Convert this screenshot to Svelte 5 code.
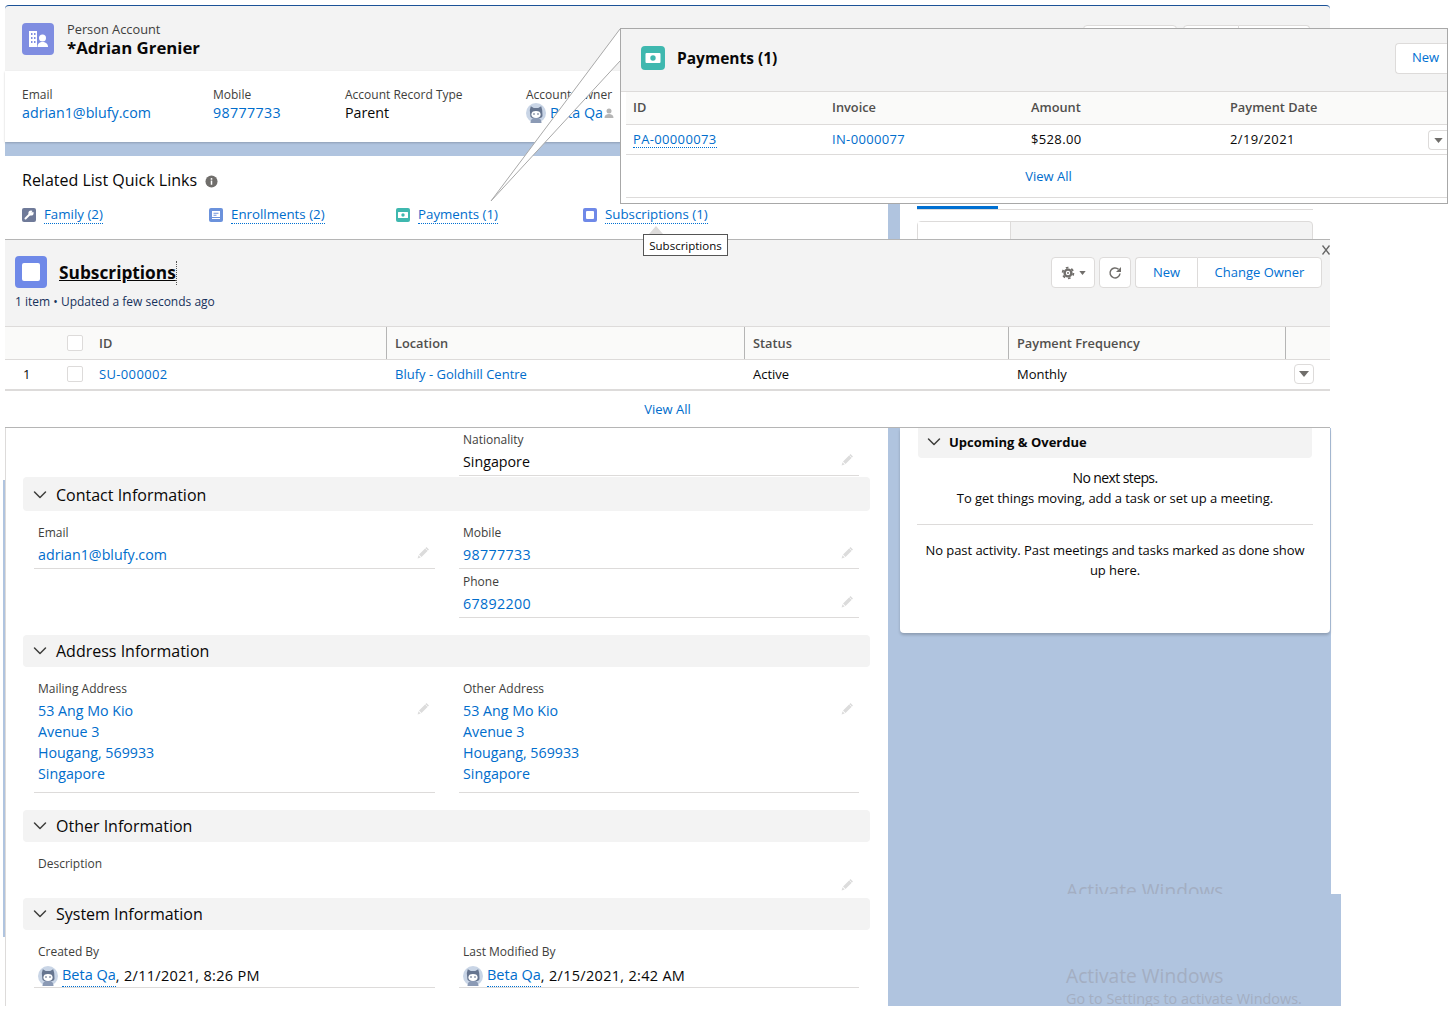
<script>
  // header strip fields
  const highlights = [
    { label: "Email", value: "adrian1@blufy.com", link: true, width: 191 },
    { label: "Mobile", value: "98777733", link: true, code: true, width: 132 },
    { label: "Account Record Type", value: "Parent", link: false, width: 181 }
  ];

  const quickLinks = [
    { name: "Family (2)", color: "#6f7a99", kind: "wrench" },
    { name: "Enrollments (2)", color: "#6b92dc", kind: "list" },
    { name: "Payments (1)", color: "#3fb8af", kind: "cash" },
    { name: "Subscriptions (1)", color: "#6f89e8", kind: "square" }
  ];

  const address = ["53 Ang Mo Kio", "Avenue 3", "Hougang, 569933", "Singapore"];
</script>

{#snippet avatar()}
  <svg class="avatar" viewBox="0 0 20 20" aria-hidden="true">
    <circle cx="10" cy="10" r="10" fill="#c9d5e6" />
    <path d="M3.800 7 4.800 3.200 7.800 5h4.400l3-1.800 1 3.800 .3 5.500c0 1.500-1 2.500-2.500 2.500h-7.200c-1.500 0-2.500-1-2.500-2.500z" fill="#66758f" />
    <path d="M4.500 20c0-3.500 2-5.500 5.500-5.500s5.500 2 5.500 5.500z" fill="#8b9ab5" />
    <ellipse cx="10" cy="11.500" rx="4.600" ry="3.400" fill="#fff" />
    <circle cx="8" cy="11" r=".8" fill="#4a5a78" />
    <circle cx="12" cy="11" r=".8" fill="#4a5a78" />
  </svg>
{/snippet}

{#snippet pencil()}
  <svg class="pencil" viewBox="0 0 13 13" aria-hidden="true">
    <path d="M9.500 1 12 3.500 4.500 11 2 8.500zM1.500 9.300 3.700 11.500 .6 12.400z" fill="#dcdcdc" />
    <path d="M8.300 2.300 10.800 4.800" stroke="#fff" stroke-width=".7" />
  </svg>
{/snippet}

{#snippet chevron()}
  <svg class="chevron" viewBox="0 0 14 14" aria-hidden="true">
    <path d="M1.500 4 7 9.500 12.500 4" fill="none" stroke="#3e3e3c" stroke-width="1.500" stroke-linecap="round" stroke-linejoin="round" />
  </svg>
{/snippet}

{#snippet linkIcon(kind, color)}
  <span class="mini-icon" style="background: {color}">
    <svg viewBox="0 0 14 14" aria-hidden="true">
      {#if kind === "wrench"}
        <path d="M3.500 10.500 8 6" stroke="#fff" stroke-width="2" stroke-linecap="round" />
        <circle cx="9" cy="5" r="2.600" fill="#fff" />
        <path d="M9.400 4.600 11.400 1.800 13 3.400z" fill={color} />
      {:else if kind === "list"}
        <path d="M3 3h8v6H3zM4.500 4.800v1h5v-1zM4.500 6.800v1h3v-1zM3 10h8v1H3z" fill="#fff" fill-rule="evenodd" />
      {:else if kind === "cash"}
        <path d="M2.500 4h9a.5.5 0 0 1 .5.500v5a.5.5 0 0 1-.5.500h-9a.5.5 0 0 1-.5-.500v-5a.5.5 0 0 1 .5-.500zM7 5.300a1.700 1.700 0 1 0 0 3.400 1.700 1.700 0 0 0 0-3.400z" fill="#fff" fill-rule="evenodd" />
      {:else}
        <rect x="3" y="3" width="8" height="8" rx="1" fill="#fff" />
      {/if}
    </svg>
  </span>
{/snippet}

{#snippet field(label, lines, link = true, code = false, tall = false)}
  <div class="field" class:no-line={tall}>
    <div class="field-label">{label}</div>
    <div class="field-value" class:tall>
      <div class:link class:code>
        {#each lines as line}
          <div>{line}</div>
        {/each}
      </div>
      {@render pencil()}
    </div>
  </div>
{/snippet}

{#snippet sectionBar(title, short = false)}
  <div class="section-bar" class:short>
    {@render chevron()}
    <span>{title}</span>
  </div>
{/snippet}

{#snippet auditField(label, stamp)}
  <div class="field">
    <div class="field-label">{label}</div>
    <div class="audit-value">
      {@render avatar()}
      <span class="link dotted">Beta Qa</span><span class="stamp">, {stamp}</span>
    </div>
  </div>
{/snippet}

<div class="page">
  <div class="column">
    <header class="record-head">
      <div class="head-top">
        <span class="record-icon">
          <svg viewBox="0 0 32 32" aria-hidden="true">
            <path d="M7 8h8v16H7zM9 10v2h1.500v-2zM12 10v2h1.500v-2zM9 14v2h1.500v-2zM12 14v2h1.500v-2zM9 18v2h1.500v-2zM12 18v2h1.500v-2z" fill="#fff" fill-rule="evenodd" />
            <circle cx="20.500" cy="15" r="3.500" fill="#fff" />
            <path d="M15.500 24c0-3.500 2-5 5-5s5.500 1.500 5.500 5z" fill="#fff" />
          </svg>
        </span>
        <div class="head-names">
          <div class="head-type">Person Account</div>
          <div class="head-name">*Adrian Grenier</div>
        </div>
        <div class="head-actions">
          <span class="ghost-btn first"></span>
          <span class="ghost-btn second"></span>
          <span class="ghost-btn third"></span>
        </div>
      </div>
      <div class="highlights">
        {#each highlights as item}
          <div class="highlight" style="width: {item.width}px">
            <div class="highlight-label">{item.label}</div>
            <div class="highlight-value" class:link={item.link} class:code={item.code}>{item.value}</div>
          </div>
        {/each}
        <div class="highlight">
          <div class="highlight-label">Account Owner</div>
          <div class="highlight-value owner">
            {@render avatar()}
            <span class="link">Beta Qa</span>
            <svg class="owner-swap" viewBox="0 0 12 12" aria-hidden="true">
              <circle cx="6" cy="4" r="2.500" fill="#b5b5b5" />
              <path d="M1.500 11c0-3 2-4 4.500-4s4.500 1 4.500 4z" fill="#b5b5b5" />
            </svg>
          </div>
        </div>
      </div>
    </header>

    <div class="band"></div>

    <div class="quick-row">
      <section class="quick-card">
        <h2 class="quick-title">
          Related List Quick Links
          <svg class="info" viewBox="0 0 14 14" aria-hidden="true">
            <circle cx="7" cy="7" r="6.500" fill="#706e6b" />
            <rect x="6.200" y="6" width="1.600" height="4.500" fill="#fff" />
            <circle cx="7" cy="4.200" r="1" fill="#fff" />
          </svg>
        </h2>
        <div class="quick-links">
          {#each quickLinks as item}
            <div class="quick-link">
              {@render linkIcon(item.kind, item.color)}
              <span class="link dotted">{item.name}</span>
            </div>
          {/each}
        </div>
      </section>
      <section class="side-card">
        <div class="tab-line"><span class="tab-active"></span></div>
        <div class="tab-box"><span class="tab-white"></span></div>
      </section>
    </div>

    <section class="subs">
      <div class="subs-head">
        <div>
          <div class="subs-title-row">
            <span class="subs-icon"><span></span></span>
            <h1 class="subs-title"><span>Subscriptions</span></h1>
          </div>
          <div class="subs-meta">1 item • Updated a few seconds ago</div>
        </div>
        <div class="subs-actions">
          <button class="btn gear" aria-label="Settings">
            <svg viewBox="0 0 14 14" width="14" height="14" aria-hidden="true">
              <circle cx="7" cy="7" r="3.400" fill="none" stroke="#706e6b" stroke-width="2.400" />
              <circle cx="7" cy="7" r="5.400" fill="none" stroke="#706e6b" stroke-width="1.800" stroke-dasharray="2.650 3" />
              <circle cx="7" cy="7" r="1" fill="#706e6b" />
            </svg>
            <svg viewBox="0 0 8 5" width="7" height="4" aria-hidden="true"><path d="M0 0h8L4 5z" fill="#706e6b" /></svg>
          </button>
          <button class="btn refresh" aria-label="Refresh">
            <svg viewBox="0 0 14 14" width="14" height="14" aria-hidden="true">
              <path d="M10.500 3.300A5 5 0 1 0 12 7.500" fill="none" stroke="#706e6b" stroke-width="1.500" />
              <path d="M13 1v5H8z" fill="#706e6b" />
            </svg>
          </button>
          <div class="btn-group">
            <button class="btn new">New</button>
            <button class="btn owner-btn">Change Owner</button>
          </div>
        </div>
      </div>
      <div class="subs-row subs-header">
        <div class="first-cell"><span class="num"></span><span class="check"></span><span>ID</span></div>
        <div class="cell">Location</div>
        <div class="cell">Status</div>
        <div class="cell">Payment Frequency</div>
        <div class="cell"></div>
      </div>
      <div class="subs-row subs-body">
        <div class="first-cell"><span class="num">1</span><span class="check"></span><span class="link code">SU-000002</span></div>
        <div class="cell link">Blufy - Goldhill Centre</div>
        <div class="cell">Active</div>
        <div class="cell">Monthly</div>
        <div class="cell menu-cell">
          <span class="row-menu"><svg viewBox="0 0 10 6" width="10" height="6" aria-hidden="true"><path d="M0 0h10L5 6z" fill="#706e6b" /></svg></span>
        </div>
      </div>
      <div class="subs-foot"><span class="link">View All</span></div>
    </section>

    <div class="lower">
      <section class="detail-card">
        <div class="fields first-fields">
          <div class="col"></div>
          <div class="col">{@render field("Nationality", ["Singapore"], false)}</div>
        </div>

        {@render sectionBar("Contact Information")}
        <div class="fields">
          <div class="col">{@render field("Email", ["adrian1@blufy.com"])}</div>
          <div class="col">
            {@render field("Mobile", ["98777733"], true, true)}
            {@render field("Phone", ["67892200"], true, true)}
          </div>
        </div>

        {@render sectionBar("Address Information", true)}
        <div class="fields">
          <div class="col address">{@render field("Mailing Address", address)}</div>
          <div class="col address">{@render field("Other Address", address)}</div>
        </div>

        {@render sectionBar("Other Information", true)}
        <div class="fields last">
          <div class="col full">{@render field("Description", [""], false, false, true)}</div>
        </div>

        {@render sectionBar("System Information", true)}
        <div class="fields last">
          <div class="col">{@render auditField("Created By", "2/11/2021, 8:26 PM")}</div>
          <div class="col">{@render auditField("Last Modified By", "2/15/2021, 2:42 AM")}</div>
        </div>
      </section>

      <aside class="activity">
        <div class="activity-card">
          <div class="upcoming">
            {@render chevron()}
            <span>Upcoming &amp; Overdue</span>
          </div>
          <div class="no-steps">No next steps.</div>
          <div class="no-steps-sub">To get things moving, add a task or set up a meeting.</div>
          <div class="no-past">No past activity. Past meetings and tasks marked as done show up here.</div>
        </div>
      </aside>
    </div>
  </div>

  <!-- stuff pasted on top of the page -->
  <div class="edge-strip"></div>
  <div class="blue-tail"></div>
  <div class="watermark clipped">Activate Windows</div>
  <div class="watermark big">Activate Windows</div>
  <div class="watermark small">Go to Settings to activate Windows.</div>

  <svg class="pointer" viewBox="0 0 134 176" aria-hidden="true">
    <path d="M131 0 2 172 131 32" fill="#fff" stroke="#a8a8a8" stroke-width="1" />
  </svg>

  <section class="popover">
    <div class="pop-head">
      <span class="pop-icon">
        <svg viewBox="0 0 24 24" aria-hidden="true">
          <path d="M5.500 7h13a1 1 0 0 1 1 1v8a1 1 0 0 1-1 1h-13a1 1 0 0 1-1-1V8a1 1 0 0 1 1-1zM12 9.300a2.700 2.700 0 1 0 0 5.400 2.700 2.700 0 0 0 0-5.400z" fill="#fff" fill-rule="evenodd" />
        </svg>
      </span>
      <h2>Payments (1)</h2>
      <button class="btn pop-new">New</button>
    </div>
    <div class="pop-body">
      <div class="pop-row pop-header">
        <span>ID</span><span>Invoice</span><span>Amount</span><span>Payment Date</span>
      </div>
      <div class="pop-row pop-data">
        <span class="link dotted pay-id code">PA-00000073</span>
        <span class="link code">IN-0000077</span>
        <span class="code">$528.00</span>
        <span class="code">2/19/2021</span>
        <span class="pop-menu"><svg viewBox="0 0 10 6" width="9" height="5" aria-hidden="true"><path d="M0 0h10L5 6z" fill="#706e6b" /></svg></span>
      </div>
      <div class="pop-foot"><span class="link">View All</span></div>
    </div>
  </section>

  <div class="tip-arrow"></div>
  <div class="tooltip">Subscriptions</div>

  <svg class="close-x" viewBox="0 0 8 10" aria-hidden="true">
    <path d="M.5 .5 7.500 9.500M7.500 .5 .5 9.500" stroke="#666" stroke-width="1.300" />
  </svg>
</div>

<style>
  :global(body) {
    margin: 0;
    background: #fff;
    font-family: "Open Sans", "Liberation Sans", sans-serif;
    font-size: 13px;
    color: #080707;
  }

  h1, h2 {
    margin: 0;
  }

  .page {
    position: relative;
    width: 1454px;
    height: 1016px;
    overflow: hidden;
  }

  .column {
    width: 1325px;
    margin-left: 5px;
    padding-top: 5px;
  }

  .link {
    color: #006dcc;
  }

  .dotted {
    border-bottom: 1px dotted #0070d2;
  }

  /* digits are wider in the original font */
  .code {
    letter-spacing: 0.35px;
  }

  /* record header */
  .record-head {
    background: #f3f3f3;
    border-top: 1px solid #1b5297;
    border-radius: 4px 4px 0 0;
  }

  .head-top {
    display: flex;
    align-items: flex-start;
    height: 65px;
    padding: 17px 20px 0 17px;
    box-sizing: border-box;
  }

  .record-icon {
    width: 32px;
    height: 32px;
    border-radius: 4px;
    background: #7f8de1;
    flex: none;
  }

  .record-icon svg {
    display: block;
  }

  .head-names {
    margin-left: 13px;
    margin-top: -2px;
  }

  .head-type {
    font-size: 12.800px;
    line-height: 16px;
    color: #3e3e3c;
  }

  .head-name {
    font-size: 16.800px;
    line-height: 21px;
    font-weight: 700;
  }

  .head-actions {
    display: flex;
    margin-left: auto;
    margin-top: 2px;
  }

  .ghost-btn {
    height: 30px;
    background: #fff;
    border: 1px solid #dddbda;
    border-radius: 4px;
    box-sizing: border-box;
  }

  .ghost-btn.first { width: 94px; margin-right: 6px; }
  .ghost-btn.second { width: 56px; border-radius: 4px 0 0 4px; }
  .ghost-btn.third { width: 71px; border-radius: 0 4px 4px 0; border-left: 0; }

  .highlights {
    display: flex;
    background: #fff;
    height: 71px;
    padding: 16px 0 0 17px;
    box-sizing: border-box;
    box-shadow: 0 1px 2px rgba(0, 0, 0, 0.2);
    position: relative;
  }

  .highlight-label {
    font-size: 12px;
    line-height: 15px;
    color: #3e3e3c;
  }

  .highlight-value {
    font-size: 14.250px;
    line-height: 21px;
  }

  .owner {
    display: flex;
    align-items: center;
    gap: 4px;
  }

  .owner-swap {
    width: 12px;
    height: 12px;
    margin-left: -4px;
  }

  .avatar {
    width: 20px;
    height: 20px;
    flex: none;
  }

  .band {
    height: 14px;
    background: #b0c4df;
  }

  /* quick links row */
  .quick-row {
    display: grid;
    grid-template-columns: 883px 12px 430px;
    height: 83px;
    background: #b0c4df;
  }

  .quick-card {
    grid-column: 1;
    background: #fff;
    padding: 14px 0 0 17px;
  }

  .quick-title {
    display: flex;
    align-items: center;
    gap: 8px;
    font-size: 16px;
    line-height: 20px;
    font-weight: 400;
  }

  .info {
    width: 13px;
    height: 13px;
    margin-top: 2px;
  }

  .quick-links {
    display: grid;
    grid-template-columns: repeat(4, 187px);
    margin-top: 16px;
  }

  .quick-link {
    display: flex;
    align-items: center;
    gap: 8px;
    font-size: 13.300px;
    line-height: 17px;
  }

  .mini-icon {
    width: 14px;
    height: 14px;
    border-radius: 2px;
    flex: none;
  }

  .mini-icon svg {
    display: block;
  }

  .side-card {
    grid-column: 3;
    background: #fff;
    padding: 50px 17px 0;
    overflow: hidden;
  }

  .tab-line {
    height: 3px;
    border-bottom: 1px solid #dddbda;
  }

  .tab-active {
    display: block;
    width: 81px;
    height: 3px;
    background: #0070d2;
  }

  .tab-box {
    margin-top: 11px;
    height: 30px;
    background: #f3f3f3;
    border: 1px solid #dddbda;
    border-radius: 4px 4px 0 0;
  }

  .tab-white {
    display: block;
    width: 92px;
    height: 100%;
    background: #fff;
    border-right: 1px solid #dddbda;
  }

  /* subscriptions */
  .subs {
    position: relative;
    border-top: 1px solid #b5b5b5;
    border-bottom: 1px solid #b5b5b5;
    background: #fff;
    height: 189px;
    box-sizing: border-box;
  }

  .subs-head {
    display: flex;
    justify-content: space-between;
    height: 87px;
    padding: 16px 8px 0 10px;
    box-sizing: border-box;
    background: #f3f3f3;
    border-bottom: 1px solid #dddbda;
  }

  .subs-title-row {
    display: flex;
    align-items: center;
    gap: 12px;
  }

  .subs-icon {
    width: 32px;
    height: 32px;
    background: #6f89e8;
    border-radius: 4px;
    display: flex;
    align-items: center;
    justify-content: center;
  }

  .subs-icon span {
    display: block;
    width: 18px;
    height: 18px;
    background: #fff;
    border-radius: 2px;
  }

  .subs-title {
    margin-top: 2px;
    font-size: 17.300px;
    line-height: 24px;
    font-weight: 700;
    text-decoration: underline;
    border-right: 1px dotted #555;
  }

  .subs-meta {
    margin-top: 5px;
    font-size: 12px;
    line-height: 18px;
    color: #16325c;
  }

  .subs-actions {
    display: flex;
    gap: 4px;
    align-items: flex-start;
    margin-top: 1px;
  }

  .btn {
    height: 31px;
    padding: 0;
    font: inherit;
    font-size: 13px;
    color: #0070d2;
    background: #fff;
    border: 1px solid #dddbda;
    border-radius: 4px;
    box-sizing: border-box;
  }

  .btn.gear {
    width: 44px;
    display: flex;
    align-items: center;
    justify-content: center;
    gap: 4px;
  }

  .btn.refresh {
    width: 32px;
    display: flex;
    align-items: center;
    justify-content: center;
  }

  .btn-group {
    display: flex;
  }

  .btn.new {
    width: 62px;
    border-radius: 4px 0 0 4px;
    border-right: 0;
    padding-bottom: 2px;
  }

  .btn.owner-btn {
    width: 125px;
    border-radius: 0 4px 4px 0;
    padding-bottom: 2px;
  }

  .subs-row {
    display: grid;
    grid-template-columns: 381px 358px 264px 277px 45px;
    align-items: stretch;
  }

  .first-cell {
    display: flex;
    align-items: center;
  }

  .num {
    width: 62px;
    padding-left: 18px;
    box-sizing: border-box;
    flex: none;
  }

  .check {
    width: 16px;
    height: 16px;
    background: #fff;
    border: 1px solid #dddbda;
    border-radius: 2px;
    box-sizing: border-box;
    margin-right: 16px;
    flex: none;
  }

  .cell {
    display: flex;
    align-items: center;
    padding-left: 8px;
  }

  .subs-header {
    height: 33px;
    background: #fafaf9;
    border-bottom: 1px solid #dddbda;
    box-sizing: border-box;
    font-size: 12.800px;
    font-weight: 600;
    color: #514f4d;
  }

  .subs-header .cell {
    border-left: 1px solid #b5b5b5;
  }

  .subs-body {
    height: 31px;
    padding-bottom: 1px;
    border-bottom: 2px solid #dddbda;
    box-sizing: border-box;
    font-size: 13px;
  }

  .subs-body .cell {
    border-left: 1px solid transparent;
  }

  .menu-cell {
    padding-left: 8px;
  }

  .row-menu {
    display: flex;
    align-items: center;
    justify-content: center;
    width: 20px;
    height: 20px;
    border: 1px solid #dddbda;
    border-radius: 4px;
    box-sizing: border-box;
  }

  .subs-foot {
    display: flex;
    align-items: center;
    justify-content: center;
    height: 36px;
    font-size: 13px;
  }

  /* bottom part */
  .lower {
    display: grid;
    grid-template-columns: 883px 443px;
    height: 578px;
  }

  .detail-card {
    background: #fff;
    border-left: 1px solid #dddbda;
    box-sizing: border-box;
    overflow: hidden;
  }

  .fields {
    display: grid;
    grid-template-columns: 401px 400px;
    column-gap: 24px;
    padding: 0 0 0 28px;
    margin: 9px 0 17px;
  }

  .fields.last {
    margin-bottom: 0;
  }

  .first-fields {
    margin: -1px 0 1px;
  }

  .col.full {
    grid-column: 1 / -1;
  }

  .field {
    height: 49px;
    padding-top: 4px;
    box-sizing: border-box;
    border-bottom: 1px solid #dddbda;
  }

  .field.no-line {
    height: 47px;
    border-bottom: 0;
  }

  .address .field {
    height: 117px;
  }

  .field-label {
    padding-left: 4px;
    font-size: 12px;
    line-height: 18px;
    color: #3e3e3c;
  }

  .field-value {
    display: flex;
    justify-content: space-between;
    align-items: flex-start;
    margin-top: 2px;
    padding-left: 4px;
    font-size: 14.250px;
    line-height: 21px;
  }

  .field-value.tall {
    margin-top: 3px;
  }

  .pencil {
    width: 13px;
    height: 13px;
    margin: 2px 5px 0 0;
    flex: none;
  }

  .section-bar {
    display: flex;
    align-items: center;
    gap: 9px;
    height: 34px;
    margin: 0 18px 0 17px;
    padding: 1px 0 0 10px;
    box-sizing: border-box;
    background: #f3f3f3;
    border-radius: 4px;
    font-size: 16px;
    color: #080707;
  }

  .section-bar.short {
    height: 32px;
    padding: 0 0 1px 10px;
  }

  .chevron {
    width: 14px;
    height: 14px;
    flex: none;
  }

  .audit-value {
    display: flex;
    align-items: center;
    gap: 4px;
    padding-left: 4px;
    margin-top: 3px;
    font-size: 14.500px;
    line-height: 22px;
    white-space: pre;
  }

  .stamp {
    margin-left: -4px;
    letter-spacing: 0.3px;
  }

  .activity {
    background: #b0c4df;
    padding-left: 12px;
  }

  .activity-card {
    width: 430px;
    height: 205px;
    padding: 0 17px;
    box-sizing: border-box;
    background: #fff;
    border-radius: 0 0 4px 4px;
    box-shadow: 0 2px 3px rgba(0, 0, 0, 0.2);
    text-align: center;
  }

  .upcoming {
    display: flex;
    align-items: center;
    gap: 8px;
    height: 30px;
    margin: 0 1px;
    padding: 0 0 3px 9px;
    box-sizing: border-box;
    background: #f3f3f3;
    border-radius: 0 0 4px 4px;
    font-size: 13px;
    font-weight: 700;
  }

  .no-steps {
    margin-top: 10px;
    font-size: 14px;
    line-height: 20px;
    letter-spacing: -0.6px;
  }

  .no-steps-sub {
    padding-bottom: 16px;
    font-size: 13px;
    line-height: 20px;
    letter-spacing: -0.05px;
    border-bottom: 1px solid #dddbda;
  }

  .no-past {
    margin-top: 15px;
    padding: 0 4px;
    font-size: 13px;
    line-height: 20px;
    letter-spacing: -0.05px;
  }

  /* overlays */
  .edge-strip {
    position: absolute;
    left: 3px;
    top: 480px;
    width: 2px;
    height: 457px;
    background: #b0c4df;
  }

  .blue-tail {
    position: absolute;
    left: 888px;
    top: 894px;
    width: 453px;
    height: 112px;
    background: #b0c4df;
  }

  .watermark {
    position: absolute;
    left: 1066px;
    white-space: nowrap;
    color: #a3aec2;
    font-size: 19.200px;
    line-height: 26px;
  }

  .clipped {
    top: 878px;
    height: 16px;
    overflow: hidden;
  }

  .big {
    top: 963px;
  }

  .small {
    top: 989px;
    height: 17px;
    overflow: hidden;
    font-size: 14.400px;
    line-height: 19px;
  }

  .pointer {
    position: absolute;
    left: 489px;
    top: 29px;
    width: 134px;
    height: 176px;
  }

  .popover {
    position: absolute;
    left: 620px;
    top: 28px;
    width: 828px;
    height: 176px;
    box-sizing: border-box;
    background: #fff;
    border: 1px solid #a8a8a8;
    overflow: hidden;
  }

  .pop-head {
    display: flex;
    align-items: center;
    height: 63px;
    padding: 0 0 4px 20px;
    box-sizing: border-box;
    background: #f3f3f3;
    border-bottom: 1px solid #dddbda;
  }

  .pop-head h2 {
    margin-left: 12px;
    font-size: 15.500px;
    font-weight: 700;
  }

  .pop-icon {
    width: 24px;
    height: 24px;
    background: #3fb8af;
    border-radius: 4px;
  }

  .pop-icon svg {
    display: block;
  }

  .pop-new {
    width: 52px;
    margin-left: auto;
    text-align: left;
    padding: 0 0 2px 16px;
    border-right: 0;
    border-radius: 4px 0 0 4px;
  }

  .pop-body {
    margin: 0 0 0 5px;
  }

  .pop-row {
    display: grid;
    grid-template-columns: 199px 199px 199px 1fr;
    align-items: center;
    position: relative;
    padding-left: 7px;
    box-sizing: border-box;
    font-size: 13px;
    border-bottom: 1px solid #dddbda;
  }

  .pop-header {
    height: 33px;
    padding-bottom: 2px;
    background: #fafaf9;
    font-size: 12.800px;
    font-weight: 600;
    color: #514f4d;
  }

  .pop-data {
    height: 30px;
    padding-bottom: 2px;
  }

  .pay-id {
    justify-self: start;
    margin-top: 2px;
    line-height: 16px;
  }

  .pop-menu {
    position: absolute;
    right: 0;
    top: 5px;
    width: 19px;
    height: 20px;
    display: flex;
    align-items: center;
    justify-content: center;
    border: 1px solid #dddbda;
    border-right: 0;
    border-radius: 4px 0 0 4px;
    box-sizing: border-box;
  }

  .pop-foot {
    display: flex;
    align-items: center;
    justify-content: center;
    height: 43px;
    padding: 0 0 0 24px;
    box-sizing: border-box;
    font-size: 13px;
    border-bottom: 1px solid #dddbda;
  }

  .tip-arrow {
    position: absolute;
    left: 649px;
    top: 226px;
    width: 0;
    height: 0;
    border-left: 7px solid transparent;
    border-right: 7px solid transparent;
    border-bottom: 8px solid #dddbda;
  }

  .tooltip {
    position: absolute;
    left: 643px;
    top: 234px;
    width: 85px;
    height: 22px;
    box-sizing: border-box;
    background: #fff;
    border: 1px solid #555;
    font-size: 11.500px;
    line-height: 21px;
    text-align: center;
  }

  .close-x {
    position: absolute;
    left: 1322px;
    top: 245px;
    width: 8px;
    height: 10px;
  }
</style>
